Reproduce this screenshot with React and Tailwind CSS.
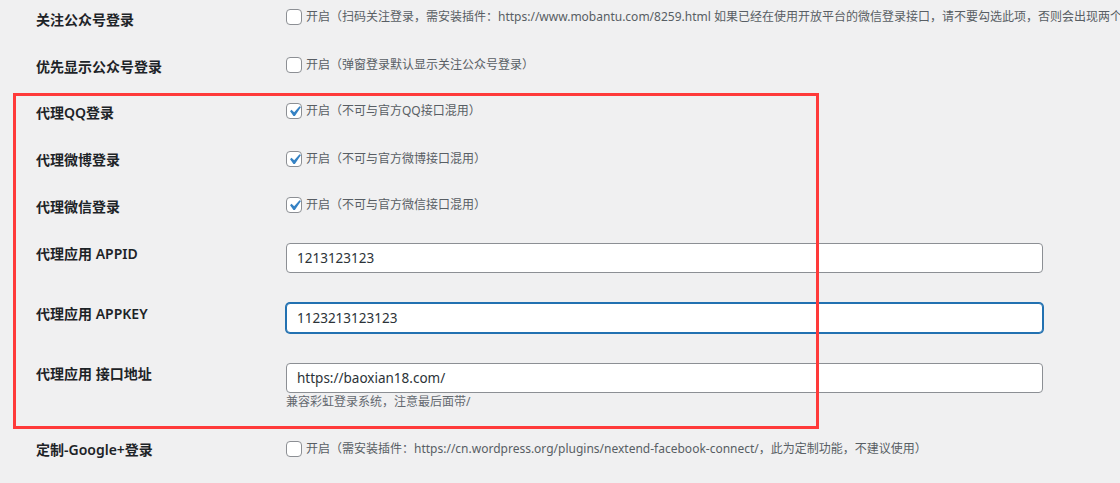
import React from "react";

function Checkbox({ checked }) {
  return (
    <span className="relative inline-block w-4 h-4 shrink-0 rounded-[4px] border border-[#8c8f94] bg-white mr-[4px]">
      {checked && (
        <svg
          className="absolute left-[-3px] top-[-3px] w-[21px] h-[21px]"
          viewBox="0 0 20 20"
        >
          <path
            d="M14.83 4.89l1.34.94-5.81 8.38H9.02L5.78 9.67l1.34-1.25 2.57 2.4z"
            fill="#3582c4"
          />
        </svg>
      )}
    </span>
  );
}

function CheckRow({ label, text, checked, rowH, labelPt, boxPt }) {
  return (
    <div className={`flex ${rowH}`}>
      <div className={`w-[286px] shrink-0 pl-[36px] ${labelPt} text-[14px] leading-[18px] font-semibold text-[#1d2327] whitespace-nowrap`}>
        {label}
      </div>
      <div className={`flex-1 min-w-0 overflow-hidden ${boxPt}`}>
        <label className="flex items-center whitespace-nowrap text-[12px] leading-[16px] text-[#585e64]">
          <Checkbox checked={checked} />
          <span>{text}</span>
        </label>
      </div>
    </div>
  );
}

function InputRow({ label, value, focused, rowH, desc }) {
  return (
    <div className={`flex ${rowH}`}>
      <div className="w-[286px] shrink-0 pl-[36px] pt-[20px] text-[14px] leading-[18px] font-semibold text-[#1d2327] whitespace-nowrap">
        {label}
      </div>
      <div className="pt-[18px]">
        <div
          className={
            focused
              ? "w-[757px] h-[30px] rounded-[4px] border border-[#2271b1] shadow-[0_0_0_1px_#2271b1] bg-white flex items-center px-[10px] text-[13.5px] text-[#2c3338]"
              : "w-[757px] h-[30px] rounded-[4px] border border-[#8c8f94] bg-white flex items-center px-[10px] text-[13.5px] text-[#2c3338]"
          }
        >
          {value}
        </div>
        {desc && (
          <div className="mt-[1px] text-[12px] leading-[16px] text-[#646970] whitespace-nowrap">
            {desc}
          </div>
        )}
      </div>
    </div>
  );
}

export default function App() {
  return (
    <div className="relative w-[1120px] h-[483px] overflow-hidden bg-[#f0f0f1] font-['Noto_Sans','Noto_Sans_CJK_SC',sans-serif]">
      <CheckRow
        label="关注公众号登录"
        text="开启（扫码关注登录，需安装插件：https://www.mobantu.com/8259.html 如果已经在使用开放平台的微信登录接口，请不要勾选此项，否则会出现两个微信登录按钮）"
        checked={false}
        rowH="h-[38px]"
        labelPt="pt-[11px]"
        boxPt="pt-[9px]"
      />
      <CheckRow
        label="优先显示公众号登录"
        text="开启（弹窗登录默认显示关注公众号登录）"
        checked={false}
        rowH="h-[46px]"
        labelPt="pt-[20px]"
        boxPt="pt-[19px]"
      />
      <CheckRow
        label="代理QQ登录"
        text="开启（不可与官方QQ接口混用）"
        checked={true}
        rowH="h-[47px]"
        labelPt="pt-[20px]"
        boxPt="pt-[19px]"
      />
      <CheckRow
        label="代理微博登录"
        text="开启（不可与官方微博接口混用）"
        checked={true}
        rowH="h-[47px]"
        labelPt="pt-[20px]"
        boxPt="pt-[20px]"
      />
      <CheckRow
        label="代理微信登录"
        text="开启（不可与官方微信接口混用）"
        checked={true}
        rowH="h-[47px]"
        labelPt="pt-[20px]"
        boxPt="pt-[19px]"
      />
      <InputRow label="代理应用 APPID" value="1213123123" rowH="h-[60px]" />
      <InputRow label="代理应用 APPKEY" value="1123213123123" focused rowH="h-[60px]" />
      <InputRow
        label="代理应用 接口地址"
        value="https://baoxian18.com/"
        rowH="h-[76px]"
        desc="兼容彩虹登录系统，注意最后面带/"
      />
      <CheckRow
        label="定制-Google+登录"
        text="开启（需安装插件：https://cn.wordpress.org/plugins/nextend-facebook-connect/，此为定制功能，不建议使用）"
        checked={false}
        rowH="h-[62px]"
        labelPt="pt-[20px]"
        boxPt="pt-[20px]"
      />
      <div className="pointer-events-none absolute left-[13px] top-[93px] w-[806px] h-[336px] border-[3px] border-[#ff3a3a]"></div>
    </div>
  );
}
